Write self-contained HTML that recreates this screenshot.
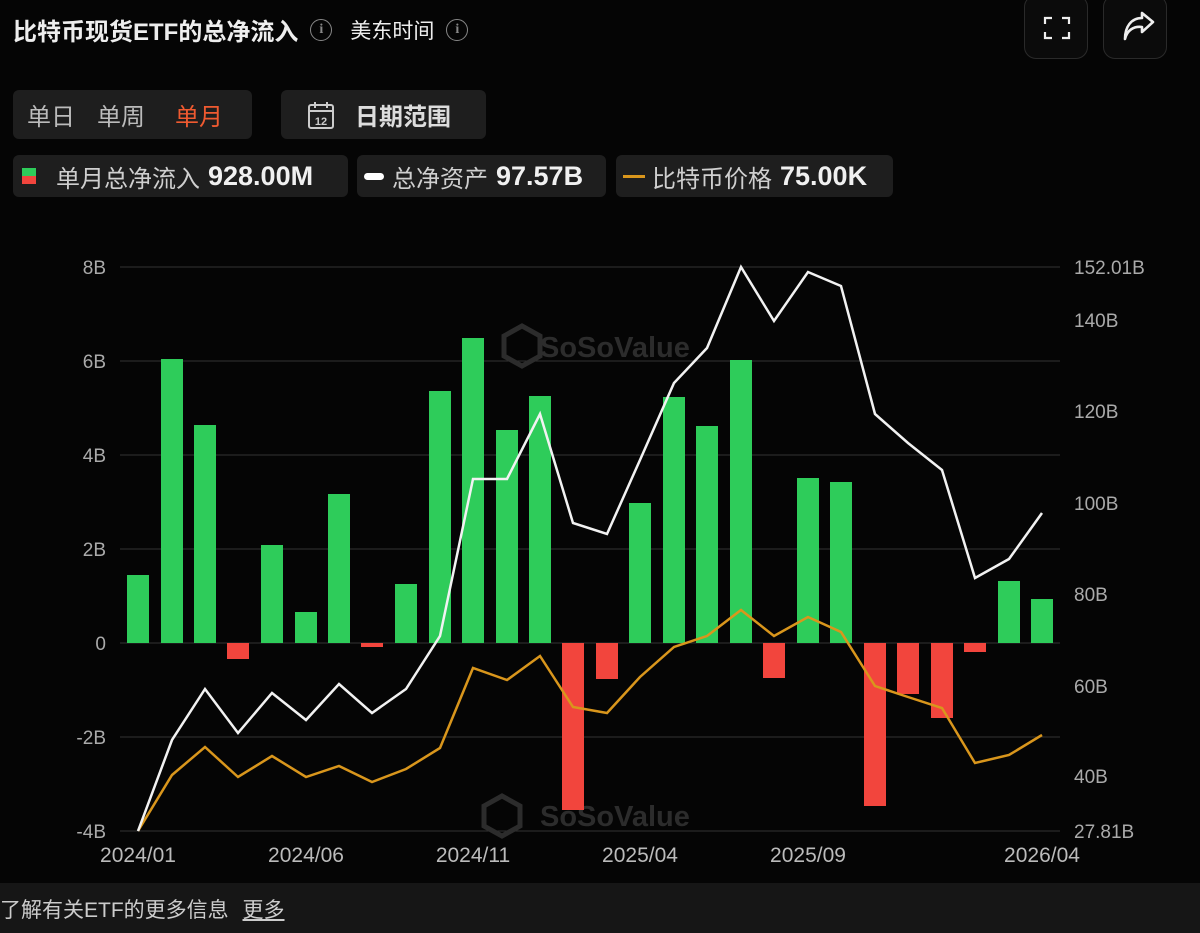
<!DOCTYPE html>
<html><head><meta charset="utf-8"><style>
*{margin:0;padding:0;box-sizing:border-box}
body{width:1200px;height:933px;background:#050505;font-family:"Liberation Sans","Noto Sans CJK SC",sans-serif;color:#e8e8e8;position:relative;overflow:hidden}
.abs{position:absolute}
.box{background:#1e1e1e;border-radius:6px}
.info{display:inline-block;width:22px;height:22px;border:1.5px solid #888;border-radius:50%;color:#888;font-size:14px;text-align:center;line-height:19px;font-family:"Liberation Serif",serif}
.chip{position:absolute;top:155px;height:42px;background:#1e1e1e;border-radius:6px;display:flex;align-items:center;font-size:24px;color:#cfcfcf}
.chip b{color:#f0f0f0;font-size:27px;margin-left:8px}
</style></head><body>
<div class="abs" style="left:13px;top:12px;font-size:24px;font-weight:bold;color:#eee;display:flex;align-items:center;gap:12px">比特币现货ETF的总净流入 <span class="info">i</span><span style="font-weight:normal;font-size:21px;margin-left:6px">美东时间</span><span class="info">i</span></div>
<div class="abs" style="left:1024px;top:-5px;width:64px;height:64px;border:1px solid #2a2a2a;border-radius:12px;background:#0b0b0b">
<svg width="64" height="64" viewBox="0 0 64 64" fill="none" stroke="#eee" stroke-width="2.2"><path d="M20 28v-6h7M37 22h7v6M44 36v6h-7M27 42h-7v-6"/></svg></div>
<div class="abs" style="left:1103px;top:-5px;width:64px;height:64px;border:1px solid #2a2a2a;border-radius:12px;background:#0b0b0b">
<svg width="64" height="64" viewBox="0 0 64 64" fill="none" stroke="#eee" stroke-width="2.6" stroke-linejoin="round"><path d="M21 43c2-9 9-13 17-12v5l11-10-11-9v5c-11 0-17 9-17 21z"/></svg></div>
<div class="abs box" style="left:13px;top:90px;width:239px;height:49px;font-size:24px;display:flex;align-items:center;padding-left:14px;color:#bbb"><span>单日</span><span style="margin-left:22px">单周</span><span style="margin-left:30px;color:#f05a30">单月</span></div>
<div class="abs box" style="left:281px;top:90px;width:205px;height:49px;display:flex;align-items:center;padding-left:26px;font-size:24px;font-weight:bold;color:#ddd">
<svg width="28" height="30" viewBox="0 0 28 30" fill="none" stroke="#ccc" stroke-width="2"><rect x="2" y="5" width="24" height="23" rx="2"/><path d="M2 11h24M8 2v6M20 2v6"/><text x="14" y="25" font-size="11" fill="#ccc" stroke="none" text-anchor="middle" font-family="Liberation Sans">12</text></svg>
<span style="margin-left:20px">日期范围</span></div>
<div class="chip" style="left:13px;width:335px;padding-left:9px"><svg width="14" height="16"><rect width="14" height="8" fill="#2ecc5a"/><rect y="8" width="14" height="8" fill="#f2453d"/></svg><span style="margin-left:20px">单月总净流入</span><b>928.00M</b></div>
<div class="chip" style="left:357px;width:249px;padding-left:7px"><span style="width:20px;height:7px;background:#fff;border-radius:4px;display:inline-block"></span><span style="margin-left:8px">总净资产</span><b>97.57B</b></div>
<div class="chip" style="left:616px;width:277px;padding-left:7px"><span style="width:22px;height:3px;background:#d9961c;display:inline-block"></span><span style="margin-left:7px">比特币价格</span><b>75.00K</b></div>
<svg class="abs" style="left:0;top:0" width="1200" height="933">
<g stroke="#333" stroke-width="1">
<line x1="120" y1="267" x2="1060" y2="267"/><line x1="120" y1="361" x2="1060" y2="361"/><line x1="120" y1="455" x2="1060" y2="455"/><line x1="120" y1="549" x2="1060" y2="549"/><line x1="120" y1="643" x2="1060" y2="643"/><line x1="120" y1="737" x2="1060" y2="737"/><line x1="120" y1="831" x2="1060" y2="831"/></g>
<g font-size="19" fill="#aaa" text-anchor="end" font-family="Liberation Sans">
<text x="106" y="274">8B</text><text x="106" y="368">6B</text><text x="106" y="462">4B</text><text x="106" y="556">2B</text><text x="106" y="650">0</text><text x="106" y="744">-2B</text><text x="106" y="838">-4B</text></g>
<g font-size="19" fill="#aaa" font-family="Liberation Sans">
<text x="1074" y="274">152.01B</text><text x="1074" y="327">140B</text><text x="1074" y="418">120B</text><text x="1074" y="510">100B</text><text x="1074" y="601">80B</text><text x="1074" y="693">60B</text><text x="1074" y="783">40B</text><text x="1074" y="838">27.81B</text></g>
<g font-size="21" fill="#bbb" font-family="Liberation Sans" text-anchor="middle">
<text x="138" y="862">2024/01</text><text x="306" y="862">2024/06</text><text x="473" y="862">2024/11</text><text x="640" y="862">2025/04</text><text x="808" y="862">2025/09</text><text x="1042" y="862">2026/04</text></g>
<g fill="#2c2c2c" font-family="Liberation Sans" font-weight="bold"><text x="540" y="357" font-size="29">SoSoValue</text><text x="540" y="826" font-size="29">SoSoValue</text>
<path d="M504 336l18-10 18 10v20l-18 10-18-10z" fill="none" stroke="#2c2c2c" stroke-width="5"/><path d="M484 806l18-10 18 10v20l-18 10-18-10z" fill="none" stroke="#2c2c2c" stroke-width="5"/></g>
<g fill="#2ecc5a">
<rect x="127" y="575" width="22" height="68"/><rect x="161" y="359" width="22" height="284"/><rect x="194" y="425" width="22" height="218"/><rect x="261" y="545" width="22" height="98"/><rect x="295" y="612" width="22" height="31"/><rect x="328" y="494" width="22" height="149"/><rect x="395" y="584" width="22" height="59"/><rect x="429" y="391" width="22" height="252"/><rect x="462" y="338" width="22" height="305"/><rect x="496" y="430" width="22" height="213"/><rect x="529" y="396" width="22" height="247"/><rect x="629" y="503" width="22" height="140"/><rect x="663" y="397" width="22" height="246"/><rect x="696" y="426" width="22" height="217"/><rect x="730" y="360" width="22" height="283"/><rect x="797" y="478" width="22" height="165"/><rect x="830" y="482" width="22" height="161"/><rect x="998" y="581" width="22" height="62"/><rect x="1031" y="599" width="22" height="44"/></g>
<g fill="#f2453d">
<rect x="227" y="643" width="22" height="16"/><rect x="361" y="643" width="22" height="4"/><rect x="562" y="643" width="22" height="167"/><rect x="596" y="643" width="22" height="36"/><rect x="763" y="643" width="22" height="35"/><rect x="864" y="643" width="22" height="163"/><rect x="897" y="643" width="22" height="51"/><rect x="931" y="643" width="22" height="75"/><rect x="964" y="643" width="22" height="9"/></g>
<polyline fill="none" stroke="#d9961c" stroke-width="2.5" points="138,831 172,775 205,747 238,777 272,756 306,777 339,766 372,782 406,769 440,748 473,668 507,680 540,656 573,707 607,713 640,677 674,647 707,636 741,610 774,636 808,617 841,632 875,686 908,697 942,708 975,763 1009,755 1042,735"/>
<polyline fill="none" stroke="#f2f2f2" stroke-width="2.5" points="138,831 172,740 205,689 238,733 272,693 306,720 339,684 372,713 406,689 440,636 473,479 507,479 540,414 573,523 607,534 640,460 674,383 707,348 741,267 774,321 808,272 841,286 875,414 908,443 942,470 975,578 1009,559 1042,513"/>
</svg>
<div class="abs" style="left:0;top:883px;width:1200px;height:50px;background:#161616;font-size:21px;color:#ccc;padding:11px 0 0 0">了解有关ETF的更多信息 <span style="margin-left:8px;text-decoration:underline">更多</span></div>
</body></html>
